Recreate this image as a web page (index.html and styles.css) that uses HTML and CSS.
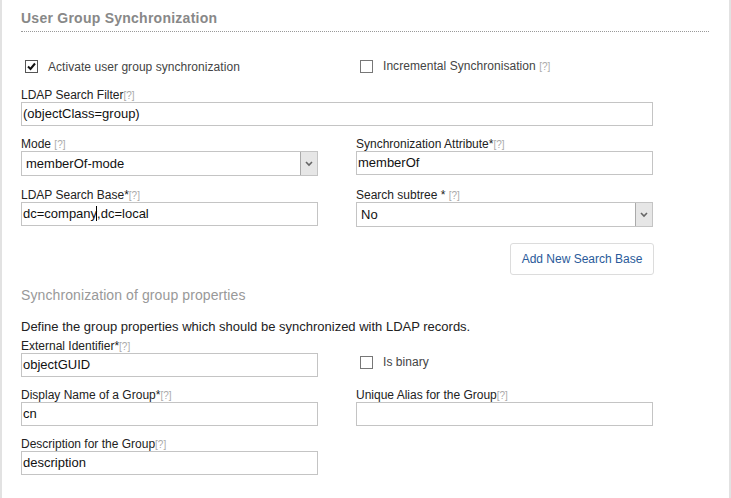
FILE: index.html
```html
<!DOCTYPE html>
<html>
<head>
<meta charset="utf-8">
<link rel="stylesheet" href="styles.css">
</head>
<body>
<div class="panel">
  <h2 class="title">User Group Synchronization</h2>
  <div class="checks">
    <label class="check"><span class="box checked"><svg viewBox="0 0 11 11" width="11" height="11"><path d="M2 5.5 L4.5 8 L9 2.5" fill="none" stroke="#111" stroke-width="2"/></svg></span><span class="check-text">Activate user group synchronization</span></label>
    <label class="check"><span class="box"></span><span class="check-text">Incremental Synchronisation <span class="help">[?]</span></span></label>
  </div>
  <div class="field full">
    <div class="label">LDAP Search Filter<span class="help">[?]</span></div>
    <div class="input">(objectClass=group)</div>
  </div>
  <div class="grid">
    <div class="field">
      <div class="label">Mode <span class="help">[?]</span></div>
      <div class="input select"><span>memberOf-mode</span><span class="arrow"><svg viewBox="0 0 8 6" width="8" height="6"><path d="M1 1 L4 4 L7 1" fill="none" stroke="#666" stroke-width="1.6"/></svg></span></div>
    </div>
    <div class="field">
      <div class="label">Synchronization Attribute*<span class="help">[?]</span></div>
      <div class="input">memberOf</div>
    </div>
    <div class="field">
      <div class="label">LDAP Search Base*<span class="help">[?]</span></div>
      <div class="input">dc=company<span class="caret"></span>,dc=local</div>
    </div>
    <div class="field">
      <div class="label">Search subtree * <span class="help">[?]</span></div>
      <div class="input select"><span>No</span><span class="arrow"><svg viewBox="0 0 8 6" width="8" height="6"><path d="M1 1 L4 4 L7 1" fill="none" stroke="#666" stroke-width="1.6"/></svg></span></div>
    </div>
  </div>
  <div class="btn-row"><button class="btn">Add New Search Base</button></div>
  <h3 class="subtitle">Synchronization of group properties</h3>
  <p class="desc">Define the group properties which should be synchronized with LDAP records.</p>
  <div class="grid grid2">
    <div class="field">
      <div class="label">External Identifier*<span class="help">[?]</span></div>
      <div class="input">objectGUID</div>
    </div>
    <div class="field binary">
      <label class="check"><span class="box"></span><span class="check-text">Is binary</span></label>
    </div>
    <div class="field">
      <div class="label">Display Name of a Group*<span class="help">[?]</span></div>
      <div class="input">cn</div>
    </div>
    <div class="field">
      <div class="label">Unique Alias for the Group<span class="help">[?]</span></div>
      <div class="input"></div>
    </div>
    <div class="field">
      <div class="label">Description for the Group<span class="help">[?]</span></div>
      <div class="input">description</div>
    </div>
  </div>
</div>
</body>
</html>
```

FILE: styles.css
```css
html, body {
  margin: 0;
  padding: 0;
  background: #fff;
}
body {
  font-family: "Liberation Sans", Arial, sans-serif;
  color: #222;
  font-size: 12px;
}
.panel {
  box-sizing: border-box;
  width: 731px;
  height: 498px;
  border-left: 2px solid #e2e2e2;
  border-right: 2px solid #e2e2e2;
  padding: 0 20px 0 19px;
}
.title {
  margin: 0;
  padding-top: 10px;
  font-size: 14px;
  line-height: 16px;
  font-weight: bold;
  color: #888;
  letter-spacing: 0.25px;
  padding-bottom: 5px;
  border-bottom: 1px dotted #999;
}
.checks {
  display: grid;
  grid-template-columns: 335px 297px;
  margin-top: 27px;
  height: 14px;
}
.check {
  display: flex;
  align-items: center;
  color: #444;
  font-size: 12px;
  line-height: 14px;
}
.check-text {
  letter-spacing: 0.05px;
}
.box {
  width: 11px;
  height: 11px;
  border: 1px solid #777;
  margin-left: 4px;
  margin-right: 10px;
  display: flex;
  align-items: center;
  justify-content: center;
  background: #fff;
}
.box.checked {
  border-color: #555;
}
.help {
  color: #aaa;
  font-size: 10px;
}
.field .label {
  line-height: 14px;
  height: 14px;
  color: #222;
}
.full {
  margin-top: 15px;
  width: 632px;
}
.input {
  box-sizing: border-box;
  height: 24px;
  border: 1px solid #c4c4c4;
  font-size: 13px;
  line-height: 22px;
  padding: 0 1px;
  color: #111;
  background: #fff;
}
.grid {
  display: grid;
  grid-template-columns: 297px 297px;
  column-gap: 38px;
  row-gap: 12px;
  margin-top: 11px;
}
.select {
  display: flex;
  justify-content: space-between;
  align-items: stretch;
  padding: 0 0 0 4px;
  height: 25px;
}
.select span:first-child {
  line-height: 23px;
}
.arrow {
  width: 16px;
  background: #e6e6e6;
  border-left: 1px solid #aaa;
  display: flex;
  align-items: center;
  justify-content: center;
}
.caret {
  display: inline-block;
  width: 1px;
  height: 15px;
  background: #000;
  vertical-align: -3px;
  margin-left: -1px;
}
.btn-row {
  display: flex;
  justify-content: flex-end;
  width: 633px;
  margin-top: 16px;
}
.btn {
  font-family: "Liberation Sans", Arial, sans-serif;
  font-size: 12px;
  color: #2a5a9a;
  background: #fff;
  border: 1px solid #dcdcdc;
  border-radius: 3px;
  width: 144px;
  height: 32px;
  padding: 0;
}
.subtitle {
  margin: 12px 0 0;
  font-size: 14px;
  font-weight: normal;
  color: #999;
  line-height: 16px;
  letter-spacing: 0.1px;
}
.desc {
  margin: 16px 0 0;
  font-size: 13px;
  line-height: 15px;
  color: #222;
}
.grid2 {
  margin-top: 5px;
  row-gap: 11px;
}
.binary {
  padding-top: 16px;
}
.binary .check {
  color: #444;
}
```
